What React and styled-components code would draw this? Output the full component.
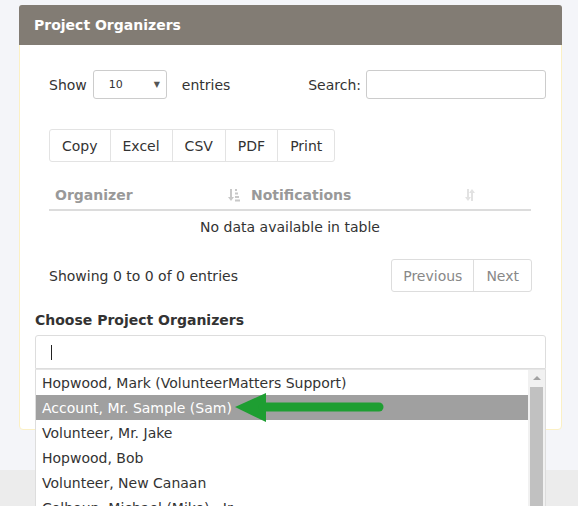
import React from "react";
import styled, { createGlobalStyle } from "styled-components";

const GlobalStyle = createGlobalStyle`
  html, body {
    margin: 0;
    padding: 0;
    background: #f4f5f9;
    font-family: "DejaVu Sans", Verdana, sans-serif;
    font-size: 14px;
    color: #333;
  }
`;

const Page = styled.div`
  position: relative;
  height: 506px;
  overflow: hidden;
  display: flex;
  flex-direction: column;
`;

const Main = styled.div`
  height: 470px;
  padding: 5px 16px 0 19px;
  box-sizing: border-box;
  position: relative;
  z-index: 2;
`;

const Footer = styled.div`
  flex: 1;
  background: #ececec;
`;

const Card = styled.div`
  background: #fff;
  border: 1px solid #fbf0c4;
  border-radius: 4px;
`;

const CardHeader = styled.div`
  height: 40px;
  background: #827c74;
  color: #fff;
  font-weight: bold;
  font-size: 14px;
  display: flex;
  align-items: center;
  padding: 0 15px;
  border-radius: 3px 3px 0 0;
  margin: -1px -1px 0 -1px;
`;

const CardBody = styled.div`
  padding: 25px 15px 60px 15px;
`;

const Wrapper = styled.div`
  padding-left: 14px;
`;

const TopRow = styled.div`
  display: flex;
  align-items: center;
  justify-content: space-between;
`;

const Label = styled.label`
  display: flex;
  align-items: center;
  gap: ${(p) => p.gap || 6}px;
  color: #333;
`;

const SelectBox = styled.div`
  width: 74px;
  height: 29px;
  box-sizing: border-box;
  border: 1px solid #ccc;
  border-radius: 3px;
  display: flex;
  align-items: center;
  justify-content: space-between;
  padding: 0 6px 0 15px;
  font-size: 11px;
  margin: 0 9px 0 0;

  span:last-child {
    font-size: 8px;
    color: #555;
  }
`;

const SearchInput = styled.div`
  width: 180px;
  height: 29px;
  box-sizing: border-box;
  border: 1px solid #ccc;
  border-radius: 3px;
`;

const ButtonGroup = styled.div`
  display: inline-flex;
  margin-top: 30px;
  border: 1px solid #e3e3e3;
  border-radius: 3px;
`;

const ExportButton = styled.div`
  height: 31px;
  display: flex;
  align-items: center;
  padding: 0 12px;
  border-left: ${(p) => (p.first ? "none" : "1px solid #e3e3e3")};
`;

const Table = styled.div`
  width: 482px;
  margin-top: 19px;
`;

const HeadRow = styled.div`
  display: grid;
  grid-template-columns: 196px 1fr;
  border-bottom: 2px solid #dcdcdc;
  height: 30px;
  box-sizing: border-box;
`;

const HeadCell = styled.div`
  display: flex;
  align-items: center;
  justify-content: space-between;
  padding: 0 ${(p) => p.right || 5}px 0 6px;
  color: #999;
  font-weight: bold;
`;

const EmptyRow = styled.div`
  height: 31px;
  display: flex;
  align-items: center;
  justify-content: center;
`;

const InfoRow = styled.div`
  width: 483px;
  display: flex;
  align-items: center;
  justify-content: space-between;
  margin-top: 17px;
`;

const Pager = styled.div`
  display: flex;
  border: 1px solid #ddd;
  border-radius: 3px;
  height: 33px;
  box-sizing: border-box;
`;

const PageButton = styled.div`
  display: flex;
  align-items: center;
  padding: 0 ${(p) => p.pad}px;
  color: #888;
  border-left: ${(p) => (p.first ? "none" : "1px solid #ddd")};
`;

const SectionTitle = styled.div`
  margin-top: 20px;
  font-weight: bold;
  color: #333;
`;

const ChooseInput = styled.div`
  position: relative;
  margin-top: 7px;
  height: 34px;
  box-sizing: border-box;
  border: 1px solid #ddd;
  border-radius: 3px 3px 0 0;
  display: flex;
  align-items: center;
  padding-left: 15px;
`;

const Caret = styled.div`
  width: 1px;
  height: 15px;
  background: #222;
`;

const Dropdown = styled.div`
  position: absolute;
  top: 33px;
  left: -1px;
  right: -1px;
  height: 200px;
  background: #fff;
  border: 1px solid #ddd;
  border-top-color: #e6e6e6;
  display: flex;
  z-index: 5;
`;

const OptionList = styled.div`
  flex: 1;
`;

const Option = styled.div`
  height: 25px;
  display: flex;
  align-items: center;
  padding-left: 6px;
  white-space: nowrap;
  background: ${(p) => (p.active ? "#a0a0a0" : "transparent")};
  color: ${(p) => (p.active ? "#fff" : "#333")};
`;

const Scrollbar = styled.div`
  width: 17px;
  background: #f1f1f1;
  display: flex;
  flex-direction: column;
  align-items: center;

  span {
    margin-top: 6px;
    width: 0;
    height: 0;
    border-left: 4px solid transparent;
    border-right: 4px solid transparent;
    border-bottom: 4px solid #a3a3a3;
  }

  div {
    margin-top: 7px;
    width: 13px;
    flex: 1;
    background: #c1c1c1;
  }
`;

const Arrow = styled.svg`
  position: absolute;
  left: 199px;
  top: 57px;
  z-index: 6;
`;

const SortDownIcon = () => (
  <svg width="12" height="14" viewBox="0 0 12 14">
    <rect x="2" y="1" width="2" height="9" fill="#c8c8c8" />
    <polygon points="0,9 6,9 3,13" fill="#c8c8c8" />
    <rect x="7" y="1" width="2" height="2" fill="#c8c8c8" />
    <rect x="7" y="4.5" width="3" height="2" fill="#c8c8c8" />
    <rect x="7" y="8" width="4" height="2" fill="#c8c8c8" />
    <rect x="7" y="11.5" width="5" height="2" fill="#c8c8c8" />
  </svg>
);

const SortBothIcon = () => (
  <svg width="10" height="14" viewBox="0 0 10 14">
    <rect x="2" y="1" width="2" height="9" fill="#e2e2e2" />
    <polygon points="0,9 6,9 3,13" fill="#e2e2e2" />
    <rect x="6" y="4" width="2" height="9" fill="#e2e2e2" />
    <polygon points="4,5 10,5 7,1" fill="#e2e2e2" />
  </svg>
);

const organizers = [
  "Hopwood, Mark (VolunteerMatters Support)",
  "Account, Mr. Sample (Sam)",
  "Volunteer, Mr. Jake",
  "Hopwood, Bob",
  "Volunteer, New Canaan",
  "Colhoun, Michael (Mike) , Jr.",
  "Smith, Anne",
];

const App = () => {
  return (
    <Page>
      <GlobalStyle />
      <Main>
        <Card>
          <CardHeader>Project Organizers</CardHeader>
          <CardBody>
            <Wrapper>
              <TopRow>
                <Label>
                  Show
                  <SelectBox>
                    <span>10</span>
                    <span>▼</span>
                  </SelectBox>
                  entries
                </Label>
                <Label gap={5}>
                  Search:
                  <SearchInput />
                </Label>
              </TopRow>

              <ButtonGroup>
                <ExportButton first>Copy</ExportButton>
                <ExportButton>Excel</ExportButton>
                <ExportButton>CSV</ExportButton>
                <ExportButton>PDF</ExportButton>
                <ExportButton>Print</ExportButton>
              </ButtonGroup>

              <Table>
                <HeadRow>
                  <HeadCell>
                    Organizer
                    <SortDownIcon />
                  </HeadCell>
                  <HeadCell right={56}>
                    Notifications
                    <SortBothIcon />
                  </HeadCell>
                </HeadRow>
                <EmptyRow>No data available in table</EmptyRow>
              </Table>

              <InfoRow>
                <span>Showing 0 to 0 of 0 entries</span>
                <Pager>
                  <PageButton first pad={11}>
                    Previous
                  </PageButton>
                  <PageButton pad={12}>Next</PageButton>
                </Pager>
              </InfoRow>
            </Wrapper>

            <SectionTitle>Choose Project Organizers</SectionTitle>
            <ChooseInput>
              <Caret />
              <Dropdown>
                <OptionList>
                  {organizers.map((name, i) => (
                    <Option key={name} active={i === 1}>
                      {name}
                    </Option>
                  ))}
                </OptionList>
                <Scrollbar>
                  <span />
                  <div />
                </Scrollbar>
              </Dropdown>
              <Arrow width="150" height="32" viewBox="0 0 150 32">
                <polygon points="0,14 31,0 31,29" fill="#1e9e32" />
                <line
                  x1="28"
                  y1="14"
                  x2="144"
                  y2="14"
                  stroke="#1e9e32"
                  strokeWidth="9"
                  strokeLinecap="round"
                />
              </Arrow>
            </ChooseInput>
          </CardBody>
        </Card>
      </Main>
      <Footer />
    </Page>
  );
};

export default App;
